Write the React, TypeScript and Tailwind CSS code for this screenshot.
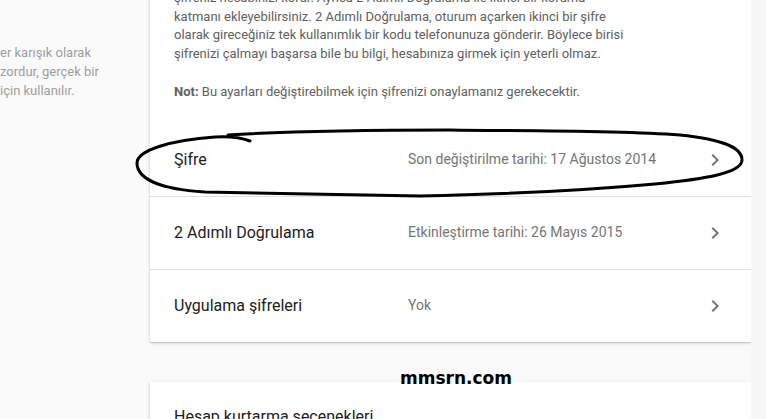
import React from "react";

const font = { fontFamily: "Roboto, 'Noto Sans', Arial, sans-serif" };

function Chevron() {
  return (
    <svg width="24" height="24" viewBox="0 0 24 24" className="fill-[#757575]">
      <path d="M10 6L8.59 7.41 13.17 12l-4.58 4.59L10 18l6-6z" />
    </svg>
  );
}

function Row({ title, value, first = false }: { title: string; value: string; first?: boolean }) {
  return (
    <div
      className={
        first
          ? "flex h-[73px] items-center border-t border-transparent pl-6 pr-[24px]"
          : "flex h-[73px] items-center border-t border-[#e0e0e0] pl-6 pr-[24px]"
      }
    >
      <div className="w-[234px] text-[16px] text-[#212121]">{title}</div>
      <div className="flex-1 text-[14px] text-[#757575]">{value}</div>
      <Chevron />
    </div>
  );
}

export default function App() {
  return (
    <div
      className="relative flex h-[419px] w-[766px] overflow-hidden bg-[#fafafa]"
      style={font}
    >
      {/* side column, its text runs in from the left */}
      <div className="w-[150px] shrink-0 overflow-hidden pt-[43px] text-[13px] leading-[19px] text-[#9e9e9e]">
        <div className="whitespace-nowrap">er karışık olarak</div>
        <div className="whitespace-nowrap">zordur, gerçek bir</div>
        <div className="whitespace-nowrap">için kullanılır.</div>
      </div>

      <div className="flex w-[601px] shrink-0 flex-col gap-[40px]">
        <div className="-mt-[11px] bg-white shadow-[0_1px_3px_rgba(0,0,0,0.2),0_1px_1px_rgba(0,0,0,0.08)]">
          <div className="px-6 pb-[21px] text-[13px] leading-[18.5px] text-[#616161]">
            <div className="whitespace-nowrap">şifreniz hesabınızı korur. Ayrıca 2 Adımlı Doğrulama ile ikinci bir koruma</div>
            <div className="whitespace-nowrap">katmanı ekleyebilirsiniz. 2 Adımlı Doğrulama, oturum açarken ikinci bir şifre</div>
            <div className="whitespace-nowrap">olarak gireceğiniz tek kullanımlık bir kodu telefonunuza gönderir. Böylece birisi</div>
            <div className="whitespace-nowrap">şifrenizi çalmayı başarsa bile bu bilgi, hesabınıza girmek için yeterli olmaz.</div>
            <div className="mt-[20px] whitespace-nowrap">
              <span className="font-bold">Not:</span> Bu ayarları değiştirebilmek için şifrenizi onaylamanız gerekecektir.
            </div>
          </div>
          <Row first title="Şifre" value="Son değiştirilme tarihi: 17 Ağustos 2014" />
          <Row title="2 Adımlı Doğrulama" value="Etkinleştirme tarihi: 26 Mayıs 2015" />
          <Row title="Uygulama şifreleri" value="Yok" />
        </div>

        <div className="h-[80px] bg-white px-6 pt-[23px] shadow-[0_1px_3px_rgba(0,0,0,0.2),0_1px_1px_rgba(0,0,0,0.08)]">
          <div className="text-[16px] text-[#212121]">Hesap kurtarma seçenekleri</div>
        </div>
      </div>

      <div className="flex-1 bg-[#f7f7f7]" />

      {/* pen mark circling the password row */}
      <svg
        className="pointer-events-none absolute left-0 top-0"
        width="766"
        height="419"
        viewBox="0 0 766 419"
        fill="none"
      >
        <path
          d="M250 141 C242 138 230 136 215 137 C172 140 137 150 137 163 C137 178 158 189 205 192 L420 196 C520 194 600 189 655 184 C705 179 742 173 742 160 C742 146 718 139 680 135 C610 130 520 131 450 130 C360 130 290 131 228 135"
          stroke="#000"
          strokeWidth="3"
          strokeLinecap="round"
          strokeLinejoin="round"
        />
      </svg>

      <div
        className="absolute left-[400px] top-[366px] text-[17px] font-bold leading-[24px] text-black"
        style={{ fontFamily: "'DejaVu Sans', Verdana, sans-serif" }}
      >
        mmsrn.com
      </div>
    </div>
  );
}
